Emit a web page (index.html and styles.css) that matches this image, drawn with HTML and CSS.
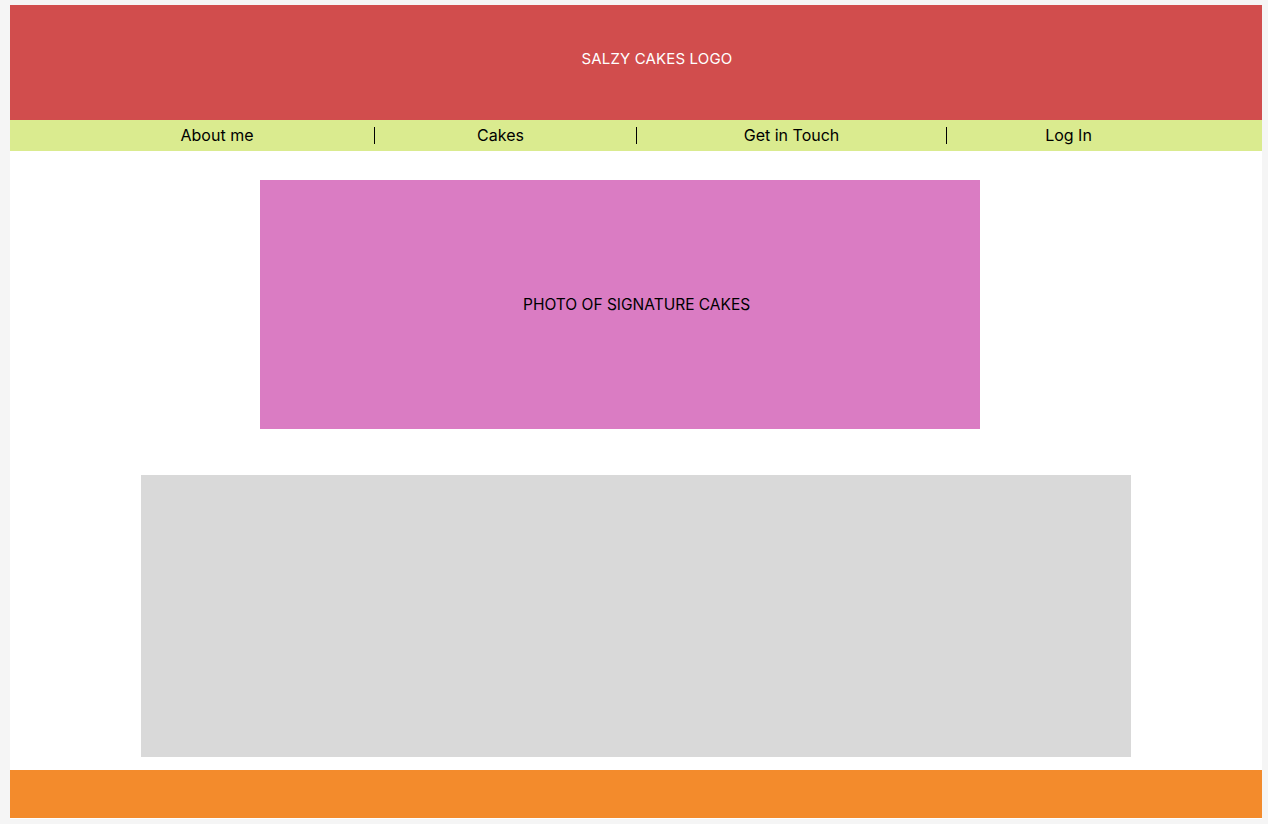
FILE: index.html
```html
<!DOCTYPE html>
<html lang="en">
<head>
<meta charset="utf-8">
<title>Salzy Cakes</title>
<link rel="stylesheet" href="styles.css">
</head>
<body>
<div class="frame">
  <header class="header">
    <span class="logo">SALZY CAKES LOGO</span>
  </header>
  <nav class="nav">
    <a class="nav-item nav-about">About me</a>
    <a class="nav-item nav-cakes sep">Cakes</a>
    <a class="nav-item nav-touch sep">Get in Touch</a>
    <a class="nav-item nav-login sep">Log In</a>
  </nav>
  <main class="main">
    <div class="photo"><span class="photo-text">PHOTO OF SIGNATURE CAKES</span></div>
    <div class="placeholder"></div>
  </main>
  <footer class="footer"></footer>
</div>
</body>
</html>
```

FILE: styles.css
```css
* { box-sizing: border-box; }
html, body { margin: 0; padding: 0; }
body {
  background: #f5f5f5;
  padding: 5px 6px 5px 10px;
  font-family: Inter, "Liberation Sans", sans-serif;
  color: #000;
}
.frame {
  width: 1252px;
  height: 814px;
  background: #fff;
  display: flex;
  flex-direction: column;
}
.header {
  height: 115px;
  background: #d14d4d;
  display: flex;
  align-items: center;
  justify-content: center;
  padding-left: 42px;
  padding-bottom: 9px;
}
.logo {
  color: #fff;
  font-size: 15px;
  letter-spacing: 0.15px;
}
.nav {
  height: 31px;
  background: #daeb8f;
  display: flex;
  align-items: center;
  padding-left: 50px;
}
.nav-item {
  height: 17px;
  line-height: 17px;
  font-size: 16px;
  text-align: center;
  color: #000;
}
.nav-item.sep { border-left: 1px solid #000; }
.nav-about { width: 314px; }
.nav-cakes { width: 262px; padding-right: 10px; }
.nav-touch { width: 310px; }
.nav-login { width: 244px; }
.main {
  flex: 1;
  display: flex;
  flex-direction: column;
  padding-top: 29px;
}
.photo {
  width: 720px;
  height: 249px;
  margin-left: 250px;
  background: #da7cc3;
  display: flex;
  align-items: center;
  padding-left: 263px;
}
.photo-text {
  font-size: 15.5px;
  color: #000;
}
.placeholder {
  width: 990px;
  height: 282px;
  margin-left: 131px;
  margin-top: 46px;
  background: #d9d9d9;
}
.footer {
  height: 48px;
  margin-bottom: 1px;
  background: #f38b2c;
}
```
